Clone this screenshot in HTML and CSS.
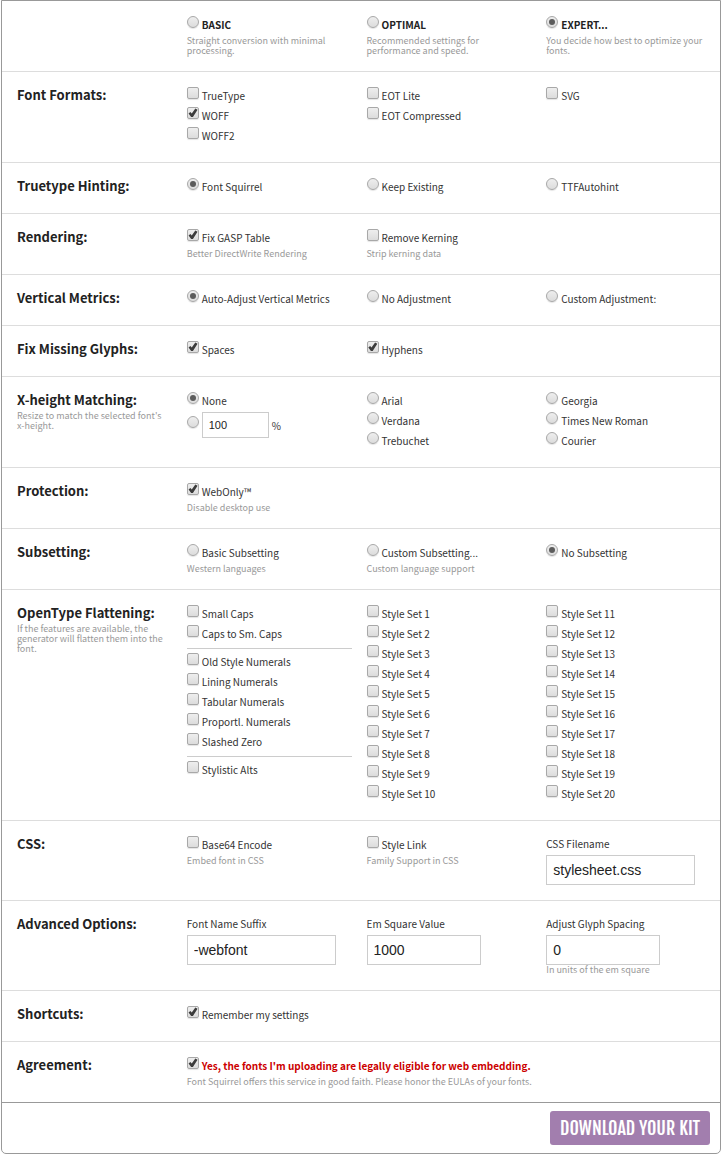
FILE: index.html
```html
<!DOCTYPE html>
<html lang="en">
<head>
<meta charset="utf-8">
<title>Webfont Generator</title>
<link rel="stylesheet" href="styles.css">
</head>
<body>
<form class="panel">
  <section class="row">
    <div></div>
    <div><label class="option strong"><input type="radio" name="mode">BASIC</label><p class="note">Straight conversion with minimal processing.</p></div>
    <div><label class="option strong"><input type="radio" name="mode">OPTIMAL</label><p class="note">Recommended settings for performance and speed.</p></div>
    <div><label class="option strong"><input type="radio" name="mode" checked>EXPERT...</label><p class="note">You decide how best to optimize your fonts.</p></div>
  </section>
  <section class="row">
    <h3 class="title">Font Formats:</h3>
    <div>
      <label class="option"><input type="checkbox">TrueType</label>
      <label class="option"><input type="checkbox" checked>WOFF</label>
      <label class="option"><input type="checkbox">WOFF2</label>
    </div>
    <div>
      <label class="option"><input type="checkbox">EOT Lite</label>
      <label class="option"><input type="checkbox">EOT Compressed</label>
    </div>
    <div><label class="option"><input type="checkbox">SVG</label></div>
  </section>
  <section class="row">
    <h3 class="title">Truetype Hinting:</h3>
    <div><label class="option"><input type="radio" name="hinting" checked>Font Squirrel</label></div>
    <div><label class="option"><input type="radio" name="hinting">Keep Existing</label></div>
    <div><label class="option"><input type="radio" name="hinting">TTFAutohint</label></div>
  </section>
  <section class="row">
    <h3 class="title">Rendering:</h3>
    <div><label class="option"><input type="checkbox" checked>Fix GASP Table</label><p class="note">Better DirectWrite Rendering</p></div>
    <div><label class="option"><input type="checkbox">Remove Kerning</label><p class="note">Strip kerning data</p></div>
  </section>
  <section class="row">
    <h3 class="title">Vertical Metrics:</h3>
    <div><label class="option"><input type="radio" name="metrics" checked>Auto-Adjust Vertical Metrics</label></div>
    <div><label class="option"><input type="radio" name="metrics">No Adjustment</label></div>
    <div><label class="option"><input type="radio" name="metrics">Custom Adjustment:</label></div>
  </section>
  <section class="row">
    <h3 class="title">Fix Missing Glyphs:</h3>
    <div><label class="option"><input type="checkbox" checked>Spaces</label></div>
    <div><label class="option"><input type="checkbox" checked>Hyphens</label></div>
  </section>
  <section class="row">
    <div class="heading"><h3 class="title">X-height Matching:</h3><p class="note">Resize to match the selected font's x-height.</p></div>
    <div>
      <label class="option"><input type="radio" name="xheight" checked>None</label>
      <div class="percent"><input type="radio" name="xheight" aria-label="Custom x-height"><input class="field small" type="text" id="xpct" value="100"><label for="xpct">%</label></div>
    </div>
    <div>
      <label class="option"><input type="radio" name="xheight">Arial</label>
      <label class="option"><input type="radio" name="xheight">Verdana</label>
      <label class="option"><input type="radio" name="xheight">Trebuchet</label>
    </div>
    <div>
      <label class="option"><input type="radio" name="xheight">Georgia</label>
      <label class="option"><input type="radio" name="xheight">Times New Roman</label>
      <label class="option"><input type="radio" name="xheight">Courier</label>
    </div>
  </section>
  <section class="row">
    <h3 class="title">Protection:</h3>
    <div><label class="option"><input type="checkbox" checked>WebOnly™</label><p class="note">Disable desktop use</p></div>
  </section>
  <section class="row">
    <h3 class="title">Subsetting:</h3>
    <div><label class="option"><input type="radio" name="subset">Basic Subsetting</label><p class="note">Western languages</p></div>
    <div><label class="option"><input type="radio" name="subset">Custom Subsetting...</label><p class="note">Custom language support</p></div>
    <div><label class="option"><input type="radio" name="subset" checked>No Subsetting</label></div>
  </section>
  <section class="row">
    <div class="heading"><h3 class="title">OpenType Flattening:</h3><p class="note">If the features are available, the generator will flatten them into the font.</p></div>
    <div>
      <label class="option"><input type="checkbox">Small Caps</label>
      <label class="option"><input type="checkbox">Caps to Sm. Caps</label>
      <hr class="divider">
      <label class="option"><input type="checkbox">Old Style Numerals</label>
      <label class="option"><input type="checkbox">Lining Numerals</label>
      <label class="option"><input type="checkbox">Tabular Numerals</label>
      <label class="option"><input type="checkbox">Proportl. Numerals</label>
      <label class="option"><input type="checkbox">Slashed Zero</label>
      <hr class="divider">
      <label class="option"><input type="checkbox">Stylistic Alts</label>
    </div>
    <div>
      <label class="option"><input type="checkbox">Style Set 1</label>
      <label class="option"><input type="checkbox">Style Set 2</label>
      <label class="option"><input type="checkbox">Style Set 3</label>
      <label class="option"><input type="checkbox">Style Set 4</label>
      <label class="option"><input type="checkbox">Style Set 5</label>
      <label class="option"><input type="checkbox">Style Set 6</label>
      <label class="option"><input type="checkbox">Style Set 7</label>
      <label class="option"><input type="checkbox">Style Set 8</label>
      <label class="option"><input type="checkbox">Style Set 9</label>
      <label class="option"><input type="checkbox">Style Set 10</label>
    </div>
    <div>
      <label class="option"><input type="checkbox">Style Set 11</label>
      <label class="option"><input type="checkbox">Style Set 12</label>
      <label class="option"><input type="checkbox">Style Set 13</label>
      <label class="option"><input type="checkbox">Style Set 14</label>
      <label class="option"><input type="checkbox">Style Set 15</label>
      <label class="option"><input type="checkbox">Style Set 16</label>
      <label class="option"><input type="checkbox">Style Set 17</label>
      <label class="option"><input type="checkbox">Style Set 18</label>
      <label class="option"><input type="checkbox">Style Set 19</label>
      <label class="option"><input type="checkbox">Style Set 20</label>
    </div>
  </section>
  <section class="row">
    <h3 class="title">CSS:</h3>
    <div><label class="option"><input type="checkbox">Base64 Encode</label><p class="note">Embed font in CSS</p></div>
    <div><label class="option"><input type="checkbox">Style Link</label><p class="note">Family Support in CSS</p></div>
    <div><label class="caption" for="cssname">CSS Filename</label><input class="field wide" type="text" id="cssname" value="stylesheet.css"></div>
  </section>
  <section class="row">
    <h3 class="title">Advanced Options:</h3>
    <div><label class="caption" for="suffix">Font Name Suffix</label><input class="field wide" type="text" id="suffix" value="-webfont"></div>
    <div><label class="caption" for="emsq">Em Square Value</label><input class="field medium" type="text" id="emsq" value="1000"></div>
    <div><label class="caption" for="spacing">Adjust Glyph Spacing</label><input class="field medium" type="text" id="spacing" value="0"><p class="note">In units of the em square</p></div>
  </section>
  <section class="row">
    <h3 class="title">Shortcuts:</h3>
    <div><label class="option"><input type="checkbox" checked>Remember my settings</label></div>
  </section>
  <section class="row">
    <h3 class="title">Agreement:</h3>
    <div class="span"><label class="option agree"><input type="checkbox" checked>Yes, the fonts I'm uploading are legally eligible for web embedding.</label><p class="note">Font Squirrel offers this service in good faith. Please honor the EULAs of your fonts.</p></div>
  </section>
  <footer class="actions"><button class="download" type="button">DOWNLOAD YOUR KIT</button></footer>
</form>
</body>
</html>
```
FILE: styles.css
```css
* { box-sizing: border-box; }
body {
  margin: 0 1px;
  background: #fff;
  color: #333;
  font-family: "Noto Sans CJK SC", "Noto Sans", sans-serif;
  font-size: 10px;
}
.panel {
  border: 1px solid #999;
  border-radius: 0 0 5px 5px;
}
.row {
  display: grid;
  grid-template-columns: 155fr 165fr 165fr 165fr;
  column-gap: 15px;
  padding: 15px 9px 15px 15px;
  border-bottom: 1px solid #ddd;
}
.row:nth-last-of-type(1) { border-bottom-color: #999; }
.heading { padding-right: 5px; }
.title {
  margin: 0 0 3px;
  color: #222;
  font-size: 13px;
  line-height: 16px;
  font-weight: 700;
}
.note {
  margin: 0;
  color: #999;
  font-size: 9px;
  line-height: 10px;
}
.span { grid-column: span 3; }
.option {
  display: flex;
  align-items: flex-start;
  gap: 3px;
  height: 20px;
  line-height: 18px;
  white-space: nowrap;
}
.strong { color: #222; font-weight: 700; }
.agree { color: #c00; font-weight: 700; }
input[type="checkbox"],
input[type="radio"] {
  appearance: none;
  flex: none;
  display: grid;
  place-items: center;
  width: 12px;
  height: 12px;
  margin: 0;
  border: 1px solid #a8a8a8;
  border-radius: 2px;
  background: linear-gradient(#eee, #dcdcdc);
  box-shadow: 0 1px 1px #e4e4e4;
}
input[type="radio"] { border-radius: 50%; }
input[type="radio"]:checked::before {
  content: "";
  width: 6px;
  height: 6px;
  border-radius: 50%;
  background: #5c5c5c;
}
input[type="checkbox"]:checked::before {
  content: "";
  width: 10px;
  height: 10px;
  background: #3c3c3c;
  clip-path: polygon(8% 54%, 26% 40%, 40% 56%, 76% 6%, 98% 18%, 52% 90%, 34% 90%);
}
.percent {
  display: flex;
  align-items: center;
  gap: 3px;
}
.divider {
  margin: 3px 0 4px;
  border: 0;
  border-top: 1px solid #ccc;
}
.percent input[type="radio"] { margin-bottom: 6px; }
.caption {
  display: block;
  margin-bottom: 3px;
  line-height: 16px;
}
.field {
  display: block;
  height: 30px;
  padding: 0 6px;
  border: 1px solid #ccc;
  background: #fff;
  color: #222;
  font: 14px "Liberation Sans", Arial, sans-serif;
}
.wide { width: 149px; }
.medium { width: 114px; }
.small {
  width: 67px;
  height: 26px;
  font-size: 11px;
}
.actions {
  display: flex;
  justify-content: flex-end;
  padding: 8px 10px;
}
.download {
  height: 34px;
  padding: 0 10px;
  border: 0;
  border-radius: 3px;
  background: #a27eae;
  color: #fff;
  font: 400 18px "Fjalla One", "Roboto Condensed", "Open Sans Condensed", "Noto Sans CJK SC", sans-serif;
}
```
